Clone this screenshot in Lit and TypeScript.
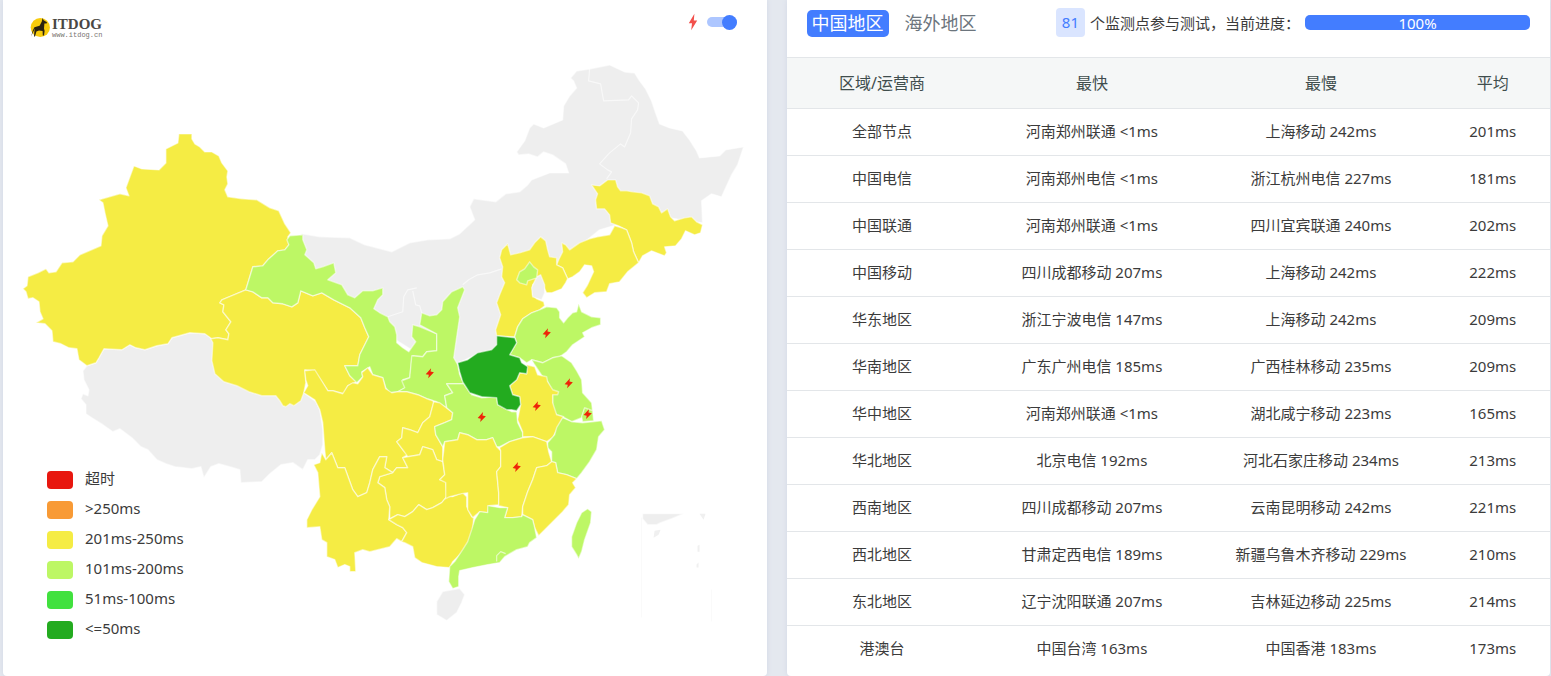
import { LitElement, html, css, svg } from "lit";
import { customElement, state } from "lit/decorators.js";

const NONE = "#eeeeee";
const SLOW = "#f5ec44";
const MID = "#bdf765";
const FAST = "#23ab1f";

interface Region {
  name: string;
  fill: string;
  points: string;
}

const regions: Region[] = [
  { name: "西藏", fill: NONE, points: "212,339 205,334 190,333 172,338 168,344 157,346 145,350 136,348 130,345 122,350 104,349 99,358 96,363 87,366 83,371 84,380 89,390 88,396 83,394 81,399 86,405 86,414 92,418 103,425 113,432 120,429 132,438 141,447 148,450 157,460 166,464 175,467 192,469 201,467 204,478 211,467 219,464 230,467 240,470 241,483 262,482 270,474 281,465 293,463 303,470 308,460 315,460 320,455 323,445 323,430 320,410 316,402 304,393 280,380 225,370" },
  { name: "内蒙古", fill: NONE, points: "302,234 320,237 350,238 365,245 392,252 410,243 428,240 450,239 460,234 475,220 470,207 474,199 496,202 506,194 520,192 528,185 532,180 550,173 569,173 566,164 553,155 544,152 538,157 529,154 519,155 517,152 525,141 530,128 534,124 544,128 563,120 564,106 570,96 577,88 574,81 571,78 577,71 590,69 610,65 625,72 635,73 640,81 646,89 652,101 656,113 660,124 670,128 683,131 690,140 697,151 700,158 720,156 726,150 744,147 738,165 732,175 722,197 712,194 702,201 703,223 650,215 600,230 560,262 530,290 500,335 495,350 478,354 457,364 440,340 412,350 380,330 330,290 290,250" },
  { name: "新疆", fill: SLOW, points: "179,134 192,134 192,139 195,144 200,147 205,152 212,152 219,156 222,163 228,171 227,177 228,184 225,190 228,197 242,199 257,200 270,208 279,211 285,224 291,233 288,237 289,245 285,250 278,251 268,260 263,266 253,267 246,290 222,300 220,303 224,305 223,312 231,322 226,330 229,334 228,340 218,338 212,339 205,334 190,333 172,338 168,344 157,346 145,350 136,348 130,345 122,350 104,349 99,358 96,363 87,366 79,360 77,349 69,348 61,344 53,342 52,331 45,324 36,323 43,319 40,312 39,302 33,298 28,299 26,292 23,289 27,286 28,277 38,273 46,269 49,273 56,272 62,263 73,262 80,255 101,246 102,236 108,226 105,213 103,203 99,200 120,194 129,196 126,188 134,166 142,169 159,170 166,163 166,149 178,143" },
  { name: "青海", fill: SLOW, points: "246,290 253,292 262,298 268,298 273,303 283,304 292,307 298,303 301,291 313,296 322,293 334,300 350,308 361,318 365,328 369,337 364,347 360,355 358,366 345,366 350,376 357,382 348,386 344,394 333,391 328,391 320,379 314,371 305,370 306,383 304,393 301,401 294,406 290,404 286,407 283,406 280,401 276,396 262,396 249,392 237,386 224,382 215,374 212,361 213,343 211,339 218,338 228,340 229,334 226,330 231,322 223,312 224,305 220,303 222,300" },
  { name: "甘肃", fill: MID, points: "303,235 290,236 287,240 289,245 285,250 278,251 268,260 263,266 253,267 246,290 253,292 262,298 268,298 273,303 283,304 292,307 298,303 301,291 313,296 322,293 334,300 350,308 361,318 365,328 369,337 364,347 360,355 358,366 345,366 350,376 357,383 363,377 362,372 370,367 373,375 383,378 386,388 390,393 398,392 407,387 403,380 410,378 412,360 413,356 423,357 427,352 437,351 437,334 420,327 413,325 412,337 416,342 409,352 403,348 397,343 397,335 395,327 390,322 388,317 380,313 374,309 378,300 383,295 383,288 373,291 363,291 355,298 348,295 342,285 328,280 336,273 334,263 323,267 316,269 314,263 305,255 307,250 303,240" },
  { name: "陕西", fill: MID, points: "422,313 430,316 437,315 442,310 443,302 452,292 463,287 465,290 458,308 460,317 457,337 454,358 458,365 460,375 464,384 447,384 453,393 445,396 447,408 437,402 427,399 418,395 407,392 398,392 405,388 402,381 410,378 412,356 423,357 427,352 437,351 437,334 420,325" },
  { name: "吉林", fill: SLOW, points: "592,185 600,186 608,180 616,180 618,187 621,191 627,191 633,192 642,193 650,196 653,204 659,207 662,213 668,209 671,217 675,221 685,218 692,217 697,222 703,225 701,233 695,235 686,231 682,239 676,246 665,247 667,253 665,256 652,251 643,256 639,263 634,252 632,243 627,230 619,226 611,223 610,215 605,209 597,209 596,200 598,194" },
  { name: "辽宁", fill: SLOW, points: "562,243 566,245 570,250 580,243 590,239 598,237 610,235 615,226 622,228 627,230 632,243 634,252 639,263 628,272 620,282 610,284 607,292 595,293 587,298 583,293 588,285 594,272 592,266 585,265 580,272 573,277 568,279 563,268 557,265 560,258 563,252" },
  { name: "河北", fill: SLOW, points: "508,244 511,255 520,253 530,250 535,243 541,237 546,241 548,250 550,257 557,258 557,265 563,268 568,279 566,283 562,289 552,293 547,293 543,285 538,280 533,285 533,295 537,299 544,302 545,306 540,310 532,313 523,319 518,327 515,337 510,337 497,336 496,330 501,315 497,303 500,295 505,283 502,277 503,267 500,258 502,250" },
  { name: "天津", fill: NONE, points: "537,277 541,275 545,285 545,293 542,300 533,297 532,288" },
  { name: "北京", fill: MID, points: "530,262 534,267 538,270 537,278 528,281 527,285 520,283 517,280 520,272 525,269" },
  { name: "四川", fill: SLOW, points: "304,393 308,386 306,380 305,371 315,370 320,378 328,391 333,391 343,394 348,386 353,383 358,384 363,377 362,373 368,368 373,375 383,378 386,389 392,393 398,392 407,392 418,395 427,399 433,401 434,403 430,417 423,423 418,433 410,430 403,428 402,438 397,442 403,450 408,455 403,458 408,468 397,468 393,473 385,468 387,457 380,457 373,470 370,483 367,493 358,497 353,490 345,468 338,468 332,453 326,460 325,450 323,423 320,410 315,400" },
  { name: "重庆", fill: SLOW, points: "434,402 440,403 453,413 452,420 445,423 435,427 436,435 443,447 443,462 437,460 433,450 423,447 420,455 408,457 403,450 397,442 402,438 403,428 410,430 418,433 423,423 430,417" },
  { name: "贵州", fill: SLOW, points: "408,457 420,455 423,447 433,450 437,460 443,462 445,475 440,480 446,482 447,497 442,503 433,508 427,510 419,505 413,512 405,517 398,515 390,519 390,507 387,500 385,488 378,483 380,477 393,473 397,468 408,468 403,458" },
  { name: "云南", fill: SLOW, points: "322,453 320,463 314,465 318,473 320,497 312,510 307,520 307,528 320,527 322,540 327,543 327,557 335,560 338,568 345,565 350,567 350,572 356,572 355,553 363,550 370,552 378,550 390,547 397,539 402,542 407,533 403,528 397,525 389,520 390,507 387,500 385,488 378,483 380,477 393,473 385,468 387,457 380,457 373,470 370,483 367,493 358,497 353,490 345,468 338,468 332,453 326,460" },
  { name: "广西", fill: SLOW, points: "389,520 398,515 405,517 413,512 419,505 427,510 433,508 442,503 447,497 453,497 463,493 467,497 467,507 472,517 474,518 473,530 468,547 462,553 453,562 450,568 437,567 422,563 415,558 413,547 405,543 402,542 407,533 403,528 397,525" },
  { name: "湖北", fill: MID, points: "447,384 464,384 472,395 482,398 497,397 498,405 512,412 517,412 518,423 523,433 523,438 510,442 500,447 497,447 493,438 487,440 477,440 468,435 460,433 458,440 445,442 443,447 436,435 435,427 445,423 452,420 453,413 447,408 445,396 453,393" },
  { name: "湖南", fill: SLOW, points: "445,442 458,440 460,433 468,435 477,440 487,440 493,438 497,447 501,451 501,467 497,472 499,493 499,505 489,506 488,513 480,512 473,518 468,510 468,493 462,494 450,497 446,499 446,483 440,480 445,475 443,460" },
  { name: "山东", fill: MID, points: "515,337 518,327 523,319 532,313 540,310 547,307 557,308 560,312 560,318 564,323 568,318 573,313 577,312 579,304 582,312 592,317 601,318 601,325 592,328 583,333 585,337 573,345 567,352 560,357 553,358 543,363 532,360 527,363 520,358 510,355 517,343" },
  { name: "江苏", fill: MID, points: "532,360 543,363 553,358 562,356 572,363 577,371 582,380 583,393 592,403 593,412 585,409 582,418 572,422 563,417 557,415 553,410 553,403 553,393 548,382 543,377 535,365" },
  { name: "安徽", fill: SLOW, points: "527,365 535,367 538,375 547,377 548,382 553,390 559,392 558,395 553,395 553,403 557,415 564,417 557,430 553,438 547,442 533,437 523,437 523,432 518,420 520,410 521,405 520,397 513,395 510,386 517,380 520,373 527,374" },
  { name: "河南", fill: FAST, points: "497,336 515,338 517,343 510,355 520,358 522,363 528,367 527,374 520,373 517,380 510,386 513,395 520,397 521,405 517,411 512,410 507,410 498,405 497,398 482,397 470,393 463,382 460,372 458,363 468,360 478,353 492,350 497,345" },
  { name: "上海", fill: MID, points: "585,408 593,411 594,421 583,422 582,417" },
  { name: "浙江", fill: MID, points: "563,418 572,422 583,423 593,422 602,421 605,430 599,437 597,450 590,462 582,473 577,479 567,475 558,473 556,463 552,462 552,452 548,448 548,443 555,435 557,428" },
  { name: "江西", fill: SLOW, points: "500,448 510,442 523,438 533,437 547,442 549,452 552,462 547,466 537,468 533,480 528,492 523,507 522,517 513,518 505,518 508,508 499,506 499,493 497,472 501,467 501,451" },
  { name: "福建", fill: SLOW, points: "552,462 556,463 558,473 567,475 577,479 573,483 576,488 570,495 569,505 563,512 552,523 545,530 539,536 535,528 533,520 523,515 523,507 528,492 533,480 537,468 547,466" },
  { name: "广东", fill: MID, points: "488,506 500,508 508,508 505,518 513,518 522,517 523,515 533,520 535,528 537,538 530,543 528,547 517,550 505,557 500,563 488,565 473,568 460,571 459,577 459,587 453,589 449,582 450,567 455,562 463,550 468,542 472,530 475,520 480,512 488,513" },
  { name: "海南", fill: NONE, points: "443,592 460,589 465,595 462,603 457,613 447,621 437,615 437,602" },
  { name: "台湾", fill: MID, points: "588,509 592,512 591,523 585,540 582,552 579,559 577,555 572,547 572,537 577,523 582,513" },
  { name: "南海诸岛", fill: NONE, points: "643,514 684,514 672,519 661,523 657,525 648,525 643,519" },
];

const innerBorders = [
  "590,69 589,81 601,84 604,101 629,100 632,96 639,103 638,110 632,119 631,133 625,147 621,144 610,153 600,164 608,170 612,172 607,179",
  "463,285 469,280 478,275 490,273 502,269",
  "388,317 403,312 404,297 408,290 417,288",
  "413,291 416,305 420,306 422,313",
  "497,562 497,556 501,552 506,554",
];

const alerts = [
  [547, 333],
  [430, 373],
  [569, 383],
  [588, 414],
  [537, 406],
  [482, 417],
  [517, 467],
];

const legend = [
  { color: "#e8170f", label: "超时" },
  { color: "#f89a35", label: ">250ms" },
  { color: SLOW, label: "201ms-250ms" },
  { color: MID, label: "101ms-200ms" },
  { color: "#41e13e", label: "51ms-100ms" },
  { color: FAST, label: "<=50ms" },
];

const rows = [
  ["全部节点", "河南郑州联通 <1ms", "上海移动 242ms", "201ms"],
  ["中国电信", "河南郑州电信 <1ms", "浙江杭州电信 227ms", "181ms"],
  ["中国联通", "河南郑州联通 <1ms", "四川宜宾联通 240ms", "202ms"],
  ["中国移动", "四川成都移动 207ms", "上海移动 242ms", "222ms"],
  ["华东地区", "浙江宁波电信 147ms", "上海移动 242ms", "209ms"],
  ["华南地区", "广东广州电信 185ms", "广西桂林移动 235ms", "209ms"],
  ["华中地区", "河南郑州联通 <1ms", "湖北咸宁移动 223ms", "165ms"],
  ["华北地区", "北京电信 192ms", "河北石家庄移动 234ms", "213ms"],
  ["西南地区", "四川成都移动 207ms", "云南昆明移动 242ms", "221ms"],
  ["西北地区", "甘肃定西电信 189ms", "新疆乌鲁木齐移动 229ms", "210ms"],
  ["东北地区", "辽宁沈阳联通 207ms", "吉林延边移动 225ms", "214ms"],
  ["港澳台", "中国台湾 163ms", "中国香港 183ms", "173ms"],
];

@customElement("latency-map")
class LatencyMap extends LitElement {
  @state() private showAlerts = true;

  static styles = css`
    :host {
      display: block;
      position: relative;
    }
    .bar {
      position: relative;
      z-index: 1;
      display: flex;
      justify-content: space-between;
      align-items: flex-start;
      padding: 12px 30px 0 27px;
    }
    .logo {
      display: flex;
      align-items: center;
      gap: 2px;
      padding-top: 4px;
      color: #4a4744;
      text-decoration: none;
    }
    .logo svg {
      width: 20px;
      height: 22px;
    }
    .brand {
      display: flex;
      flex-direction: column;
    }
    .name {
      font: bold 15px/16px "Liberation Serif", serif;
    }
    .site {
      color: #77736f;
      font: 7px/6px "Liberation Mono", monospace;
    }
    .switch {
      display: flex;
      align-items: center;
      gap: 9px;
      height: 20px;
    }
    .switch svg {
      width: 10px;
      height: 18px;
    }
    .switch input {
      appearance: none;
      display: flex;
      align-items: center;
      width: 30px;
      height: 10px;
      margin: 0;
      border-radius: 5px;
      background: #dcdfe6;
      cursor: pointer;
    }
    .switch input::before {
      content: "";
      width: 15px;
      height: 15px;
      border-radius: 50%;
      background: #a3a9b5;
    }
    .switch input:checked {
      justify-content: flex-end;
      background: #adc6ff;
    }
    .switch input:checked::before {
      background: #437dff;
    }
    .map {
      position: absolute;
      inset: 0;
      width: 100%;
    }
    .region {
      stroke: #fff;
      stroke-opacity: 0.5;
      stroke-width: 1.4;
      stroke-linejoin: round;
    }
    .inner {
      fill: none;
      stroke: #fff;
      stroke-opacity: 0.6;
      stroke-width: 1.2;
      stroke-linejoin: round;
    }
    .legend {
      position: absolute;
      left: 44px;
      bottom: 31px;
      margin: 0;
      padding: 0;
      list-style: none;
    }
    .legend li {
      display: flex;
      align-items: center;
      gap: 12px;
      height: 30px;
    }
    .swatch {
      width: 26px;
      height: 18px;
      border-radius: 4px;
    }
    .label {
      height: 30px;
      line-height: 26px;
    }
  `;

  render() {
    return html`
      <header class="bar">
        <a class="logo" href="#">
          <svg viewBox="0 0 20 22" aria-hidden="true">
            <circle cx="10.3" cy="11.5" r="9.6" fill="#f8cc0c" />
            <path
              d="M12.6 2 13.6 4.2 17 6.2 16.6 7.4 14.4 7.6 14 12.4 14.6 15 14 19.6 12.8 19.6 12.6 15 9 14.4 6.4 15.6 5 20.4 4 20.4 4.4 15 4.8 12.6 2 18.6 1.2 20.4 2.6 15 4.4 11.2 9.6 9.8 11.8 5.6Z"
              fill="#2b2310"
            />
          </svg>
          <span class="brand"><span class="name">ITDOG</span><span class="site">www.itdog.cn</span></span>
        </a>
        <label class="switch">
          <svg viewBox="0 0 10 18" role="img" aria-label="闪电">
            <path d="M6.4 0.8 0.8 10.2H4L3.2 17.2 9.2 7.4H5.8Z" fill="#f2504b" />
          </svg>
          <input
            type="checkbox"
            .checked=${this.showAlerts}
            @change=${(e: Event) => (this.showAlerts = (e.target as HTMLInputElement).checked)}
          />
        </label>
      </header>
      <svg class="map" viewBox="3 0 764 676" preserveAspectRatio="xMidYMin meet" role="img">
        ${regions.map(
          (r) => svg`<polygon class="region" data-region=${r.name} points=${r.points} fill=${r.fill} />`
        )}
        ${innerBorders.map((p) => svg`<polyline class="inner" points=${p} />`)}
        <g fill="#f0f0f0">
          <path d="M655 531 661 530 659 535 654 538ZM700 514H706L704 520ZM698 546 700 545V552H698ZM697 565 699 563V568H697Z" />
        </g>
        <path d="M642 518V618M712 590V622" stroke="#fafafa" fill="none" />
        ${this.showAlerts
          ? alerts.map(
              ([x, y]) => svg`<path transform="translate(${x} ${y})" d="M1.4-4.6-4 1.4-.9 2-1.5 5.4 4.2-.5.8-1.2Z" fill="#ee2408" />`
            )
          : null}
      </svg>
      <ul class="legend">
        ${legend.map(
          (l) => html`<li><span class="swatch" style="background:${l.color}"></span><span class="label">${l.label}</span></li>`
        )}
      </ul>
    `;
  }
}

@customElement("result-panel")
class ResultPanel extends LitElement {
  @state() private tab = 0;
  private progress = 100;

  static styles = css`
    :host {
      display: block;
    }
    .top {
      display: flex;
      align-items: center;
      gap: 11px;
      height: 47px;
      padding: 0 20px 10px;
    }
    .tab {
      height: 27px;
      padding: 0 5px;
      border: 0;
      border-radius: 5px;
      background: none;
      color: #6c757d;
      font: inherit;
      font-size: 18px;
      line-height: 27px;
      white-space: nowrap;
      cursor: pointer;
    }
    .tab.active {
      background: #437dff;
      color: #fff;
    }
    .status {
      display: flex;
      align-items: center;
      gap: 5px;
      margin-left: auto;
      padding-bottom: 2px;
      white-space: nowrap;
    }
    .count {
      padding: 0 6px;
      border-radius: 4px;
      background: #dae5ff;
      color: #437dff;
      line-height: 29px;
    }
    .track {
      width: 225px;
      height: 15px;
      border-radius: 5px;
      background: #e9ecef;
    }
    .fill {
      height: 100%;
      border-radius: 5px;
      background: #437dff;
      color: #fff;
      line-height: 16px;
      text-align: center;
    }
    table {
      width: 100%;
      border-collapse: collapse;
      table-layout: fixed;
      text-align: center;
    }
    th,
    td {
      height: 44px;
      padding: 0 0 2px;
      border-top: 1px solid #e3e6e9;
      font-weight: normal;
    }
    th {
      height: 50px;
      padding: 0;
      background: #f5f7f7;
      color: #3f4d4d;
      font-size: 16px;
    }
    .side {
      width: 25%;
    }
    .wide {
      width: 30%;
    }
    .narrow {
      width: 15%;
    }
  `;

  render() {
    return html`
      <header class="top">
        ${["中国地区", "海外地区"].map(
          (t, i) => html`<button class="tab ${this.tab === i ? "active" : ""}" @click=${() => (this.tab = i)}>${t}</button>`
        )}
        <div class="status">
          <span class="count">81</span>
          <span id="progress-label">个监测点参与测试，当前进度：</span>
          <div class="track" role="progressbar" aria-labelledby="progress-label" aria-valuenow=${this.progress}>
            <div class="fill" style="width:${this.progress}%">${this.progress}%</div>
          </div>
        </div>
      </header>
      <table>
        <thead>
          <tr>
            <th class="side">区域/运营商</th>
            <th class="wide">最快</th>
            <th class="wide">最慢</th>
            <th class="narrow">平均</th>
          </tr>
        </thead>
        <tbody>
          ${rows.map((r) => html`<tr>${r.map((c) => html`<td>${c}</td>`)}</tr>`)}
        </tbody>
      </table>
    `;
  }
}

@customElement("app-root")
class AppRoot extends LitElement {
  static styles = css`
    :host {
      display: grid;
      grid-template-columns: 1fr 1fr;
      gap: 20px;
      box-sizing: border-box;
      min-height: 100vh;
      padding: 0 1px 0 3px;
      background: #e4e8ef;
      color: #3b3b3b;
      font: 15px/22px "Noto Sans", "Noto Sans CJK SC", sans-serif;
    }
    .card {
      border-radius: 0 0 4px 4px;
      background: #fff;
      box-shadow: 0 0 5px #d3d8e6;
    }
  `;

  render() {
    return html`
      <latency-map class="card"></latency-map>
      <result-panel class="card"></result-panel>
    `;
  }
}
